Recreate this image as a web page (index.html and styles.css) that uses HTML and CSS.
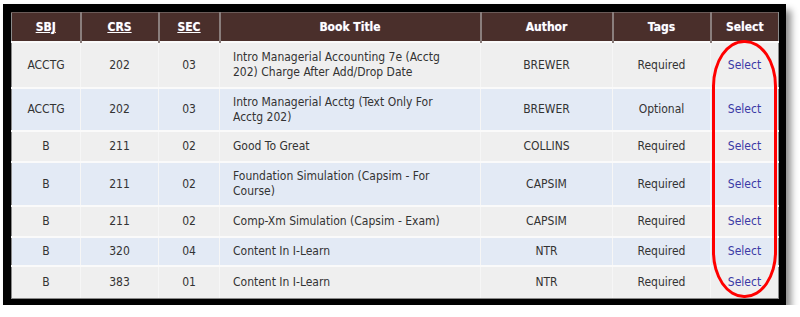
FILE: index.html
```html
<!DOCTYPE html>
<html>
<head>
<meta charset="utf-8">
<link rel="stylesheet" href="styles.css">
</head>
<body>
<div class="frame">
  <table class="books">
    <colgroup>
      <col class="c-sbj"><col class="c-crs"><col class="c-sec"><col class="c-title"><col class="c-author"><col class="c-tags"><col class="c-select">
    </colgroup>
    <thead>
      <tr>
        <th><a class="sort">SBJ</a></th>
        <th><a class="sort">CRS</a></th>
        <th><a class="sort">SEC</a></th>
        <th>Book Title</th>
        <th>Author</th>
        <th>Tags</th>
        <th>Select</th>
      </tr>
    </thead>
    <tbody>
      <tr class="odd r-tall">
        <td>ACCTG</td><td>202</td><td>03</td>
        <td class="title">Intro Managerial Accounting 7e (Acctg 202) Charge After Add/Drop Date</td>
        <td>BREWER</td><td>Required</td><td><a class="sel">Select</a></td>
      </tr>
      <tr class="even r-tall2">
        <td>ACCTG</td><td>202</td><td>03</td>
        <td class="title">Intro Managerial Acctg (Text Only For Acctg 202)</td>
        <td>BREWER</td><td>Optional</td><td><a class="sel">Select</a></td>
      </tr>
      <tr class="odd r-short">
        <td>B</td><td>211</td><td>02</td>
        <td class="title">Good To Great</td>
        <td>COLLINS</td><td>Required</td><td><a class="sel">Select</a></td>
      </tr>
      <tr class="even r-tall3">
        <td>B</td><td>211</td><td>02</td>
        <td class="title">Foundation Simulation (Capsim - For Course)</td>
        <td>CAPSIM</td><td>Required</td><td><a class="sel">Select</a></td>
      </tr>
      <tr class="odd r-short">
        <td>B</td><td>211</td><td>02</td>
        <td class="title">Comp-Xm Simulation (Capsim - Exam)</td>
        <td>CAPSIM</td><td>Required</td><td><a class="sel">Select</a></td>
      </tr>
      <tr class="even r-short2">
        <td>B</td><td>320</td><td>04</td>
        <td class="title">Content In I-Learn</td>
        <td>NTR</td><td>Required</td><td><a class="sel">Select</a></td>
      </tr>
      <tr class="odd r-last">
        <td>B</td><td>383</td><td>01</td>
        <td class="title">Content In I-Learn</td>
        <td>NTR</td><td>Required</td><td><a class="sel">Select</a></td>
      </tr>
    </tbody>
  </table>
  <div class="circle"></div>
</div>
</body>
</html>
```

FILE: styles.css
```css
html, body {
  margin: 0;
  padding: 0;
  background: #ffffff;
}

body {
  font-family: "DejaVu Sans Condensed", "DejaVu Sans", sans-serif;
  font-size: 12px;
  color: #333333;
}

.frame {
  position: relative;
  width: 767px;
  margin: 4px 0 0 3px;
  border: 8px solid #000000;
  border-bottom-width: 6px;
  box-shadow: 5px 6px 7px rgba(0, 0, 0, 0.45);
  background: #f0f0f0;
}

.books {
  width: 767px;
  table-layout: fixed;
  border-collapse: collapse;
}

.c-sbj { width: 69px; }
.c-crs { width: 78px; }
.c-sec { width: 61px; }
.c-title { width: 261px; }
.c-author { width: 132px; }
.c-tags { width: 98px; }
.c-select { width: 68px; }

.books th {
  height: 28px;
  padding: 0;
  background: #4a2f2b;
  color: #ffffff;
  font-weight: bold;
  font-size: 12px;
  text-shadow: 0 0 1px rgba(200, 200, 255, 0.6);
  border-left: 2px solid #8a7e7c;
  border-top: 1px solid #6b5b58;
  text-align: center;
}

.books th:first-child {
  border-left: 1px solid #8a8a8a;
}

.books th:last-child {
  border-right: 1px solid #8a8a8a;
}

.sort {
  text-decoration: underline;
  color: #ffffff;
}

.books td {
  padding: 0;
  text-align: center;
  border-top: 2px solid #fafafa;
  border-left: 1px solid #f6f6f6;
  line-height: 15px;
  vertical-align: middle;
}

.books td:first-child {
  border-left: 1px solid #8a8a8a;
}

.books td:last-child {
  border-right: 1px solid #8a8a8a;
}

.books td.title {
  text-align: left;
  padding-left: 13px;
  padding-right: 14px;
}

.odd td { background: #efefef; }
.even td { background: #e3eaf5; }

.r-tall td { height: 44px; }
.r-tall2 td { height: 41px; }
.r-short td { height: 29px; }
.r-tall3 td { height: 42px; }
.r-short2 td { height: 27px; }
.r-last td { height: 31px; border-bottom: 1px solid #8a8a8a; }

.sel {
  color: #3b3aa6;
}

.circle {
  position: absolute;
  left: 701px;
  top: 28px;
  width: 59px;
  height: 252px;
  border: 3px solid #ff0000;
  border-radius: 32px / 46px;
  pointer-events: none;
}
```
